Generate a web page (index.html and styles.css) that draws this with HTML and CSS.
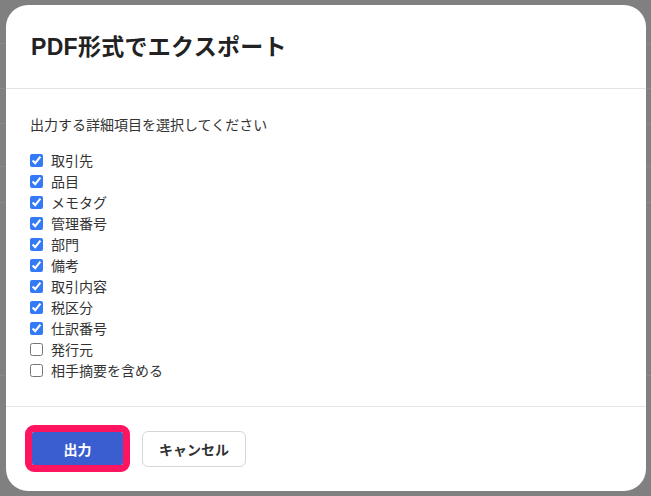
FILE: index.html
```html
<!DOCTYPE html>
<html lang="ja">
<head>
<meta charset="utf-8">
<title>PDF形式でエクスポート</title>
<link rel="stylesheet" href="styles.css">
</head>
<body>
<div class="modal">
  <div class="modal-header">
    <h1 class="modal-title">PDF形式でエクスポート</h1>
  </div>
  <div class="modal-body">
    <p class="lead">出力する詳細項目を選択してください</p>
    <ul class="options">
      <li><label><input type="checkbox" checked><span>取引先</span></label></li>
      <li><label><input type="checkbox" checked><span>品目</span></label></li>
      <li><label><input type="checkbox" checked><span>メモタグ</span></label></li>
      <li><label><input type="checkbox" checked><span>管理番号</span></label></li>
      <li><label><input type="checkbox" checked><span>部門</span></label></li>
      <li><label><input type="checkbox" checked><span>備考</span></label></li>
      <li><label><input type="checkbox" checked><span>取引内容</span></label></li>
      <li><label><input type="checkbox" checked><span>税区分</span></label></li>
      <li><label><input type="checkbox" checked><span>仕訳番号</span></label></li>
      <li><label><input type="checkbox"><span>発行元</span></label></li>
      <li><label><input type="checkbox"><span>相手摘要を含める</span></label></li>
    </ul>
  </div>
  <div class="modal-footer">
    <button class="btn btn-primary" type="button">出力</button>
    <button class="btn btn-secondary" type="button">キャンセル</button>
  </div>
</div>
</body>
</html>
```

FILE: styles.css
```css
html, body {
  margin: 0;
  padding: 0;
}
body {
  width: 651px;
  height: 496px;
  overflow: hidden;
  background-color: #808080;
  background-image:
    linear-gradient(to bottom, transparent 43px, #8a8a8a 43px, #8a8a8a 44px, transparent 44px),
    linear-gradient(to bottom, transparent 88px, #8a8a8a 88px, #8a8a8a 89px, transparent 89px),
    linear-gradient(to bottom, transparent 123px, #8a8a8a 123px, #8a8a8a 124px, transparent 124px),
    linear-gradient(to bottom, transparent 166px, #8a8a8a 166px, #8a8a8a 167px, transparent 167px),
    linear-gradient(to bottom, transparent 202px, #8a8a8a 202px, #8a8a8a 203px, transparent 203px),
    linear-gradient(to bottom, transparent 375px, #8a8a8a 375px, #8a8a8a 376px, transparent 376px);
  font-family: "Noto Sans CJK JP", "Noto Sans", sans-serif;
  color: #333;
  padding: 5px 5px 5px 6px;
  box-sizing: border-box;
}
.modal {
  width: 640px;
  height: 486px;
  background: #fff;
  border-radius: 22px;
  display: flex;
  flex-direction: column;
  overflow: hidden;
}
.modal-header {
  height: 84px;
  flex: none;
  display: flex;
  align-items: center;
  padding: 0 25px 3px;
  box-sizing: border-box;
  border-bottom: 1px solid #e3e3e3;
}
.modal-title {
  margin: 0;
  font-family: "Liberation Sans", "Noto Sans CJK JP", sans-serif;
  font-size: 23px;
  font-weight: bold;
  color: #222;
  letter-spacing: 0.3px;
}
.modal-body {
  flex: 1;
  padding: 25px 24px 0;
  border-bottom: 1px solid #e3e3e3;
}
.lead {
  margin: 0 0 15px;
  font-size: 14px;
  line-height: 21px;
  color: #333;
}
.options {
  list-style: none;
  margin: 0;
  padding: 0;
}
.options li {
  height: 21px;
  line-height: 21px;
  font-size: 14px;
}
.options label {
  display: flex;
  align-items: center;
  gap: 8px;
}
.options input {
  margin: 0;
  width: 13px;
  height: 13px;
  accent-color: #3479f6;
}
.modal-footer {
  height: 84px;
  flex: none;
  display: flex;
  align-items: center;
  padding: 0 26px 1px;
  box-sizing: border-box;
  gap: 19px;
}
.btn {
  font-family: "Noto Sans CJK JP", sans-serif;
  font-size: 14px;
  font-weight: bold;
  cursor: pointer;
}
.btn-primary {
  width: 91px;
  height: 33px;
  border: none;
  border-radius: 2px;
  background: #3a5ecf;
  color: #fff;
  outline: 7px solid #ff1460;
  outline-offset: 0;
}
.btn-secondary {
  width: 104px;
  height: 36px;
  background: #fff;
  border: 1px solid #d6d6d6;
  border-radius: 6px;
  color: #333;
}
```
